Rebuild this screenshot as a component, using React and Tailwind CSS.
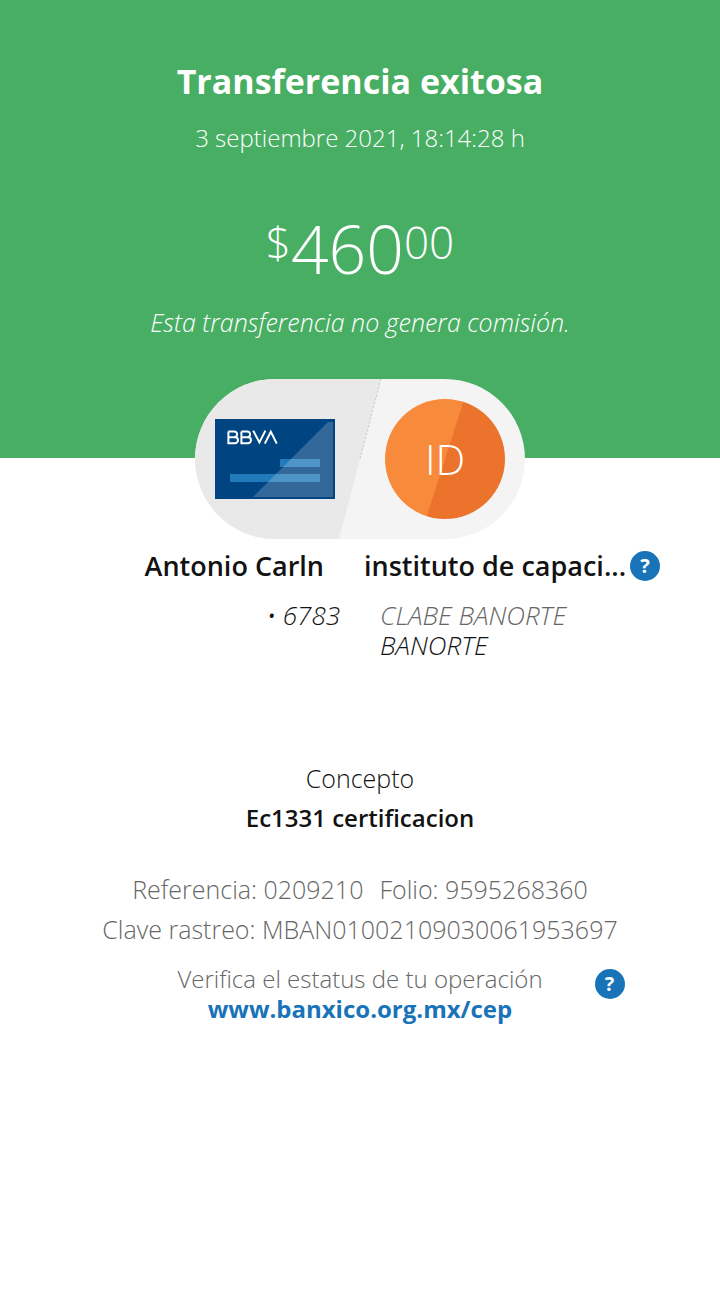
function HelpButton({ label }) {
  return (
    <button
      type="button"
      aria-label={label}
      className="flex size-[30px] shrink-0 items-center justify-center rounded-full bg-[#1973b8] text-xl font-bold leading-none text-white"
    >
      ?
    </button>
  );
}

function AccountsBadge() {
  return (
    <div className="relative flex h-40 w-[330px] items-center justify-between overflow-hidden rounded-full bg-[#f4f4f4] px-5">
      <svg className="absolute inset-0" width="330" height="160" viewBox="0 0 330 160" aria-hidden="true">
        <path d="M0 0H186L144 160H0Z" fill="#e9e9e9" />
        <path d="M186 0L165 80" stroke="#48ae64" strokeOpacity="0.45" strokeWidth="0.9" strokeDasharray="2 2" />
      </svg>
      <svg className="relative" width="120" height="80" viewBox="0 0 120 80" role="img" aria-label="BBVA">
        <rect width="120" height="80" fill="#004481" />
        <rect x="65" y="40" width="40" height="8" fill="#237aba" />
        <rect x="15" y="55" width="90" height="8" fill="#237aba" />
        <path d="M113 3H118V78H38Z" fill="#fff" fillOpacity="0.2" />
        <g fill="none" stroke="#fff" strokeWidth="2">
          <path d="M13.4 12.4V24.2H20A3 3 0 0 0 20 18.2H13.4M13.4 12.4H19.2A2.9 2.9 0 0 1 19.2 18.2" />
          <path d="M26.4 12.4V24.2H33A3 3 0 0 0 33 18.2H26.4M26.4 12.4H32.2A2.9 2.9 0 0 1 32.2 18.2" />
          <path d="M38.2 11.6L44.4 23.4L50.4 11.6" />
          <path d="M49.8 24.6L55.8 12.8L61.8 24.6" />
        </g>
      </svg>
      <div className="relative flex size-[120px] items-center justify-center rounded-full bg-[linear-gradient(107.8deg,#f78b3b_50%,#eb732b_50%)] text-[42px] font-light leading-[56px] text-white">
        ID
      </div>
    </div>
  );
}

export default function App() {
  return (
    <main className="min-h-screen bg-white font-['Open_Sans',sans-serif] text-[25px] text-[#121212]">
      <header className="flex flex-col items-center bg-[#48ae64] px-6 pb-[116px] pt-[61px] text-center text-white">
        <h1 className="text-[34px] font-bold leading-10">Transferencia exitosa</h1>
        <p className="mt-[17px] text-2xl font-light leading-10">3 septiembre 2021, 18:14:28 h</p>
        <p className="mt-[50px] flex items-start font-light leading-[80px]">
          <span className="text-[44px] leading-[68px]">$</span>
          <span className="text-[66px]">460</span>
          <span className="text-[44px] leading-[68px]">00</span>
        </p>
        <p className="mt-[14px] font-light italic leading-10">
          Esta transferencia no genera comisión.
        </p>
      </header>

      <section className="relative -mt-[79px] flex flex-col items-center">
        <AccountsBadge />
        <div className="mt-[7px] grid w-full grid-cols-2 gap-10 pr-8 text-[27px] font-semibold leading-10">
          <h2 className="text-right">Antonio Carln</h2>
          <div className="flex items-center gap-1 whitespace-nowrap">
            <h2>instituto de capaci...</h2>
            <HelpButton label="Ayuda sobre el destinatario" />
          </div>
        </div>
        <div className="mt-[14px] grid w-full grid-cols-2 gap-10 text-[26px] font-light italic leading-[30px]">
          <p className="text-right">• 6783</p>
          <div>
            <p className="text-[#666666]">CLABE BANORTE</p>
            <p>BANORTE</p>
          </div>
        </div>
      </section>

      <section className="mt-[98px] text-center leading-10">
        <p className="font-light">Concepto</p>
        <p className="text-2xl font-semibold leading-10">Ec1331 certificacion</p>
      </section>

      <section className="mt-[31px] text-center font-light leading-10 text-[#666666]">
        <p className="flex justify-center gap-4">
          <span>Referencia: 0209210</span>
          <span>Folio: 9595268360</span>
        </p>
        <p>Clave rastreo: MBAN01002109030061953697</p>
      </section>

      <section className="mt-[15px] grid grid-cols-[1fr_auto_1fr] pb-10 text-center text-2xl leading-[30px]">
        <p className="col-start-2 font-light text-[#666666]">
          Verifica el estatus de tu operación
          <a href="https://www.banxico.org.mx/cep" className="block font-bold text-[#1973b8]">
            www.banxico.org.mx/cep
          </a>
        </p>
        <div className="pl-[52px] pt-[5px]">
          <HelpButton label="Ayuda sobre el estatus" />
        </div>
      </section>
    </main>
  );
}
